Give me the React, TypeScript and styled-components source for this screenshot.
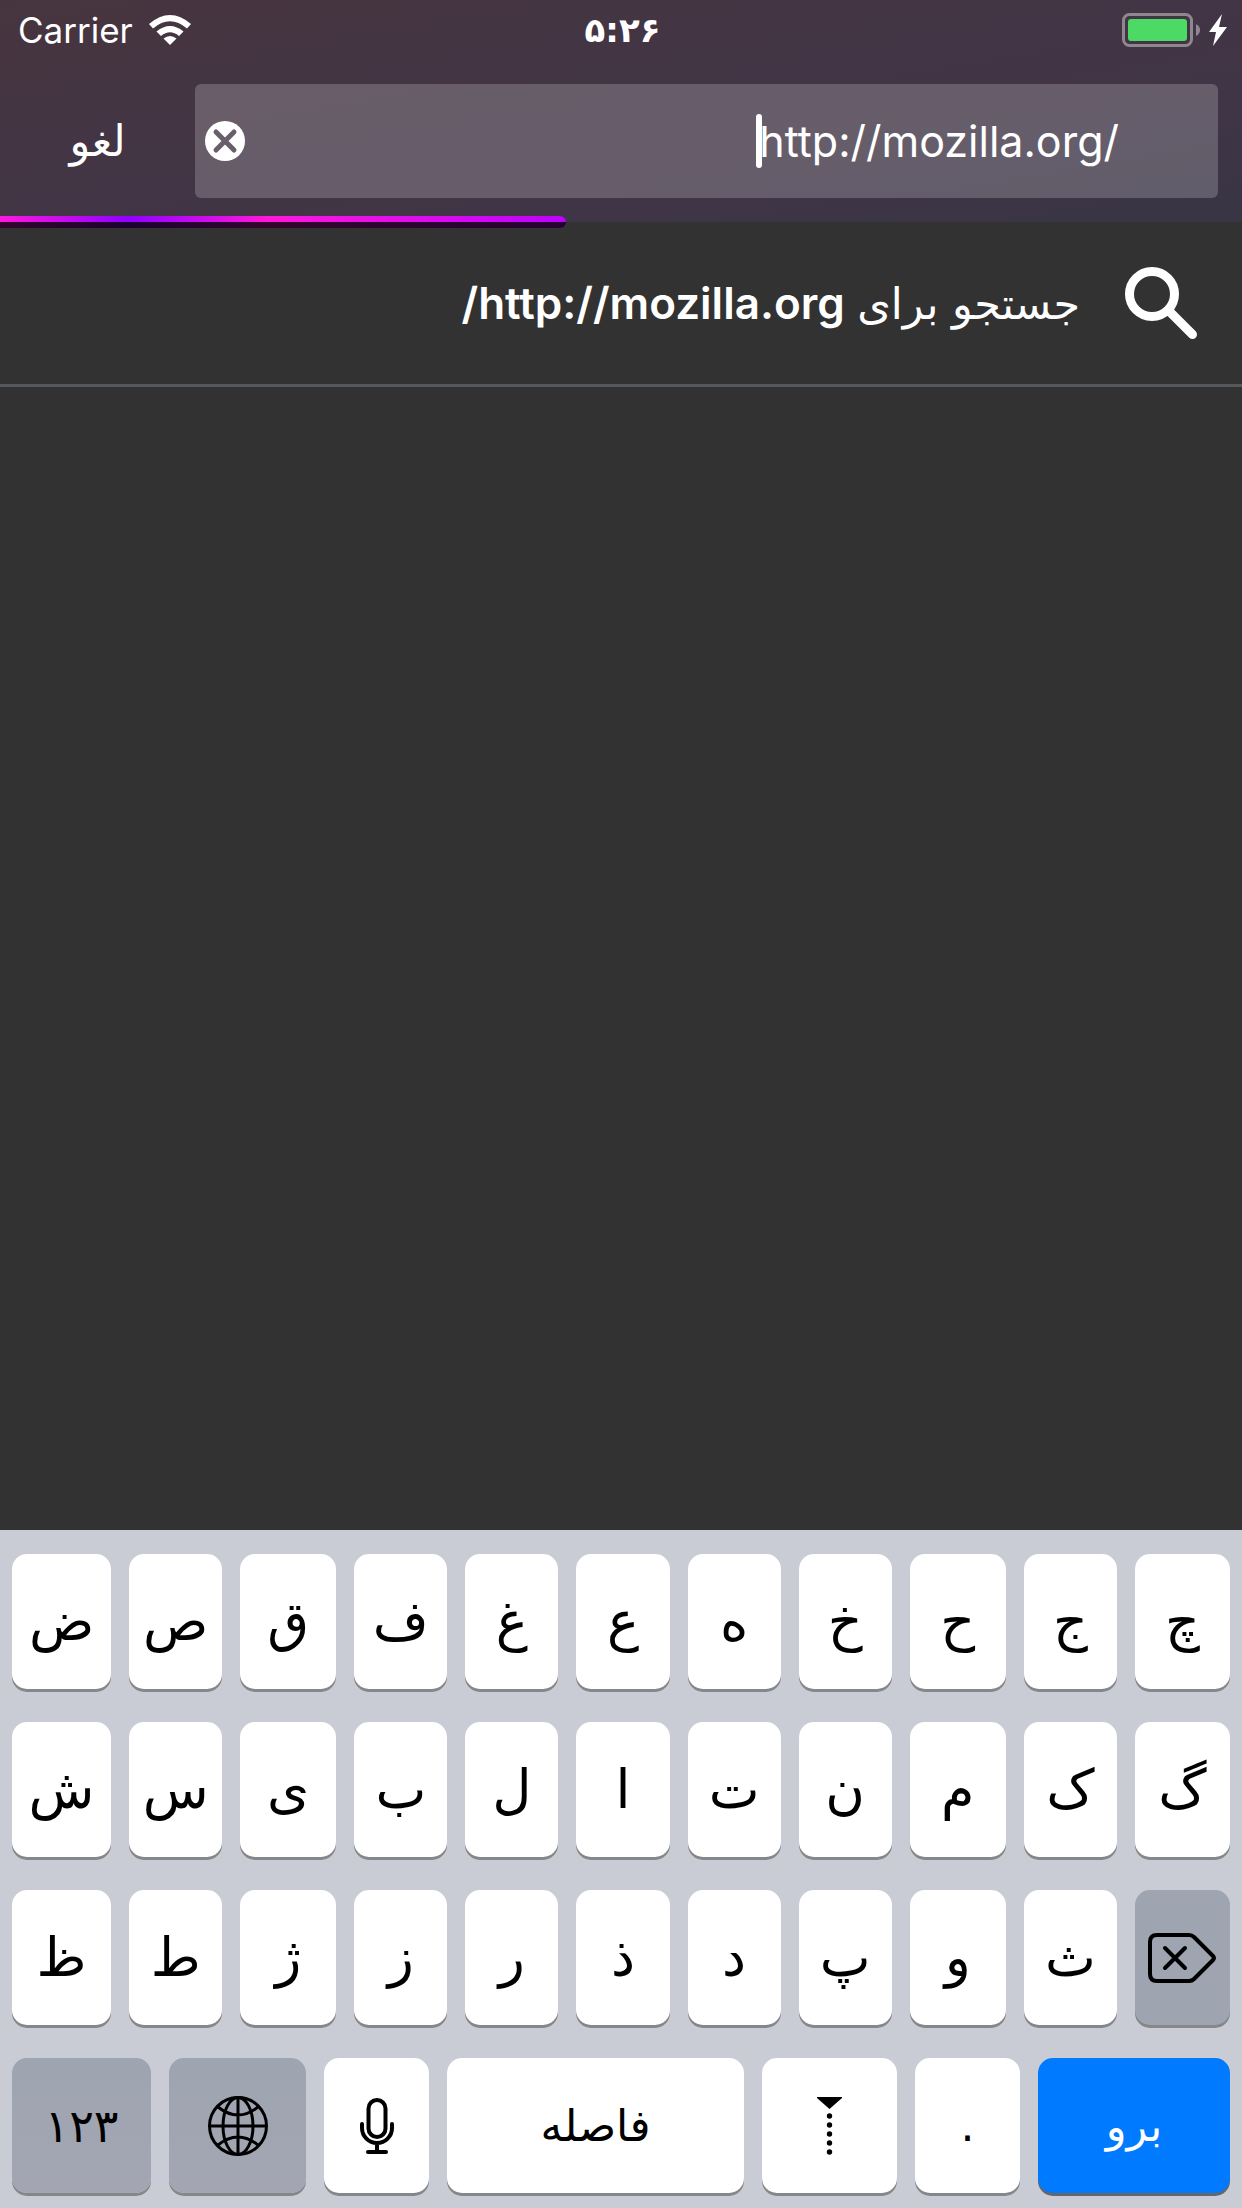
import React, { useState } from "react";
import styled, { createGlobalStyle, css } from "styled-components";

const latin = `Inter, "DejaVu Sans", sans-serif`;
const persian = `"DejaVu Sans", sans-serif`;

const GlobalStyle = createGlobalStyle`
  * { box-sizing: border-box; }
  body { margin: 0; background: #323232; }
  button, input { font: inherit; color: inherit; border: 0; padding: 0; margin: 0; background: none; }
`;

const Screen = styled.div`
  min-height: 100vh;
  display: flex;
  flex-direction: column;
  background: #323232;
  color: #fff;
  font-family: ${latin};
`;

const Header = styled.header`
  height: 222px;
  display: flex;
  flex-direction: column;
  background: linear-gradient(170deg, #47353e 0%, #433544 35%, #403546 70%, #383545 100%);
`;

const StatusBar = styled.div`
  height: 60px;
  display: grid;
  grid-template-columns: 1fr auto 1fr;
  align-items: center;
  padding: 0 15px 0 18px;
`;

const Carrier = styled.div`
  display: flex;
  align-items: center;
  gap: 16px;
  font-size: 35px;
  line-height: 60px;
`;

const Clock = styled.time`
  font: bold 34px/60px ${persian};
`;

const Power = styled.div`
  display: flex;
  justify-content: flex-end;
  align-items: center;
`;

const UrlRow = styled.div`
  display: flex;
  align-items: center;
  height: 162px;
  padding: 0 24px 0 0;
`;

const Cancel = styled.button`
  width: 195px;
  font: 43px/60px ${persian};
`;

const UrlBox = styled.div`
  flex: 1;
  height: 114px;
  display: flex;
  align-items: center;
  padding: 0 99px 0 9px;
  border-radius: 6px;
  background: rgba(255, 255, 255, 0.2);
`;

const ClearButton = styled.button`
  display: flex;
  margin-right: auto;
`;

const Caret = styled.span`
  width: 6px;
  height: 54px;
  margin-right: -3px;
  border-radius: 3px;
  background: #fff;
`;

const UrlInput = styled.input`
  field-sizing: content;
  font-size: 43px;
  line-height: 60px;
  outline: none;
`;

const Progress = styled.div`
  width: 566px;
  height: 12px;
  margin: -6px 0;
  z-index: 1;
  border-radius: 0 6px 6px 0;
  background:
    linear-gradient(transparent 50%, rgba(0, 0, 0, 0.8) 50%),
    linear-gradient(90deg, #ff18dd 0, #9000ff 128px, #ff18dd 267px, #b400ff 600px);
`;

const SearchRow = styled.button`
  display: flex;
  align-items: center;
  gap: 45px;
  height: 165px;
  padding: 0 45px;
  border-bottom: 3px solid #55585c;
  direction: rtl;
  font: 44px/60px ${latin};
`;

const Phrase = styled.span`
  font-family: ${persian};
  font-size: 43px;
`;

const Suggestion = styled.strong`
  font-family: ${latin};
  font-weight: 600;
`;

const Results = styled.main`
  flex: 1;
  display: flex;
  flex-direction: column;
`;

const Keyboard = styled.section`
  display: flex;
  flex-direction: column;
  gap: 33px;
  padding: 24px 12px 15px;
  background: #c9ccd4;
  color: #000;
`;

const KeyRow = styled.div<{ $columns: string }>`
  display: grid;
  grid-template-columns: ${(p) => p.$columns};
  gap: 18px;
`;

type Tone = "letter" | "space" | "dark" | "shade" | "go";

const tones = {
  letter: css`background: #fff; font-size: 54px;`,
  space: css`background: #fff; font-size: 44px;`,
  dark: css`background: #9ea5b1;`,
  shade: css`background: linear-gradient(#9da5b0, #a4a5b3); font-size: 46px;`,
  go: css`background: #007aff; color: #fff; font-size: 43px; box-shadow: 0 3px 0 #63676c;`,
};

const Key = styled.button<{ $tone: Tone }>`
  min-width: 0;
  height: 135px;
  display: flex;
  align-items: center;
  justify-content: center;
  border-radius: 15px;
  box-shadow: 0 3px 0 #858789;
  font-family: ${persian};
  line-height: 90px;
  ${(p) => tones[p.$tone]}
`;

const letterColumns = "99fr 93fr 96fr 93fr 93fr 93fr 93fr 93fr 96fr 93fr 95fr";
const bottomColumns = "139fr 137fr 105fr 297fr 135fr 105fr 192fr";

const rows = [
  ["ض", "ص", "ق", "ف", "غ", "ع", "ه", "خ", "ح", "ج", "چ"],
  ["ش", "س", "ی", "ب", "ل", "ا", "ت", "ن", "م", "ک", "گ"],
  ["ظ", "ط", "ژ", "ز", "ر", "ذ", "د", "پ", "و", "ث"],
];

const WifiIcon = () => (
  <svg width="42" height="31" viewBox="0 0 42 31" fill="#fff">
    <path d="M0 9Q21 -9 42 9L38 13.500Q21 -1 4 13.500Z" />
    <path d="M7.500 16.500Q21 5.500 34.500 16.500L30 21Q21 13.500 12 21Z" />
    <path d="M14.500 23.500Q21 18.500 27.500 23.500L21 30Z" />
  </svg>
);

const BatteryIcon = () => (
  <svg width="105" height="34" viewBox="0 0 105 34">
    <rect x="1.500" y="1.500" width="68" height="31" rx="6" fill="none" stroke="#8f8690" strokeWidth="3" />
    <rect x="6" y="6" width="59" height="22" rx="3" fill="#4cd964" />
    <path d="M74 11Q78 13 78 17T74 23Z" fill="#8f8690" />
    <path d="M100 1L87 19H94L91 33L105 14H97Z" fill="#fff" />
  </svg>
);

const ClearIcon = () => (
  <svg width="42" height="42" viewBox="0 0 42 42">
    <circle cx="21" cy="21" r="20" fill="#fff" />
    <path d="M12 12L30 30M30 12L12 30" stroke="#695f6b" strokeWidth="5" strokeLinecap="round" />
  </svg>
);

const SearchIcon = () => (
  <svg width="72" height="72" viewBox="0 0 72 72" fill="none" stroke="#fff">
    <circle cx="27" cy="27" r="22.500" strokeWidth="9" />
    <path d="M44 44L67.500 67.500" strokeWidth="9" strokeLinecap="round" />
  </svg>
);

const DeleteIcon = () => (
  <svg width="70" height="52" viewBox="0 0 70 52" fill="none" stroke="#000" strokeWidth="4" strokeLinecap="round" strokeLinejoin="round">
    <path d="M10 3H42Q45 3 47 5L66 24Q68 26 66 28L47 47Q45 49 42 49H10Q3 49 3 42V10Q3 3 10 3Z" />
    <path d="M18 16L38 36M38 16L18 36" />
  </svg>
);

const GlobeIcon = () => (
  <svg width="60" height="60" viewBox="0 0 60 60" fill="none" stroke="#000" strokeWidth="3">
    <circle cx="30" cy="30" r="28.500" />
    <ellipse cx="30" cy="30" rx="15" ry="28.500" />
    <path d="M30 1V59M1 30H59M10 11Q30 27 50 11M10 49Q30 33 50 49" />
  </svg>
);

const MicIcon = () => (
  <svg width="36" height="58" viewBox="0 0 36 58" fill="none" stroke="#000" strokeWidth="4" strokeLinecap="round">
    <rect x="9.500" y="3" width="17" height="37" rx="8.500" />
    <path d="M3 27V31A15 15 0 0 0 33 31V27M18 46V55M9 55H27" />
  </svg>
);

const JoinerIcon = () => (
  <svg width="25" height="58" viewBox="0 0 25 58">
    <path d="M0 0H25V1L12.500 12L0 1Z" />
    {[19, 28, 37, 46, 55].map((y) => (
      <circle key={y} cx="12.500" cy={y} r="2.700" />
    ))}
  </svg>
);

export default function App() {
  const [url, setUrl] = useState("http://mozilla.org/");
  return (
    <Screen>
      <GlobalStyle />
      <Header>
        <StatusBar>
          <Carrier>
            Carrier
            <WifiIcon />
          </Carrier>
          <Clock>۵:۲۶</Clock>
          <Power>
            <BatteryIcon />
          </Power>
        </StatusBar>
        <UrlRow>
          <Cancel>لغو</Cancel>
          <UrlBox>
            <ClearButton aria-label="Clear" onClick={() => setUrl("")}>
              <ClearIcon />
            </ClearButton>
            <Caret />
            <UrlInput aria-label="URL" value={url} onChange={(e) => setUrl(e.target.value)} />
          </UrlBox>
        </UrlRow>
      </Header>
      <Progress />
      <Results>
        <SearchRow>
          <SearchIcon />
          <span>
            <Phrase>جستجو برای</Phrase> <Suggestion>http://mozilla.org/</Suggestion>
          </span>
        </SearchRow>
      </Results>
      <Keyboard>
        {rows.map((row, i) => (
          <KeyRow key={i} $columns={letterColumns}>
            {row.map((letter) => (
              <Key key={letter} $tone="letter">{letter}</Key>
            ))}
            {i === 2 && (
              <Key $tone="dark" aria-label="Delete">
                <DeleteIcon />
              </Key>
            )}
          </KeyRow>
        ))}
        <KeyRow $columns={bottomColumns}>
          <Key $tone="shade">۱۲۳</Key>
          <Key $tone="shade" aria-label="Next keyboard"><GlobeIcon /></Key>
          <Key $tone="letter" aria-label="Dictate"><MicIcon /></Key>
          <Key $tone="space">فاصله</Key>
          <Key $tone="letter" aria-label="Zero-width non-joiner"><JoinerIcon /></Key>
          <Key $tone="space">.</Key>
          <Key $tone="go">برو</Key>
        </KeyRow>
      </Keyboard>
    </Screen>
  );
}
